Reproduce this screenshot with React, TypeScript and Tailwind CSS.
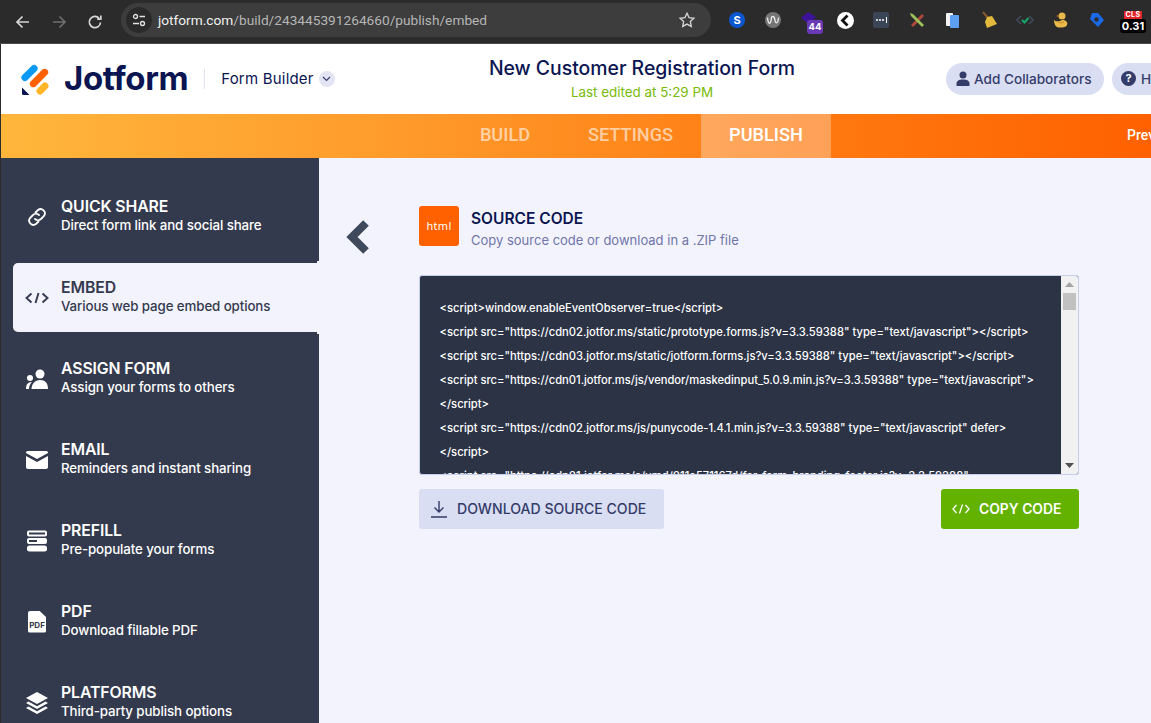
import React from "react";

const sans = "font-['Inter','Noto_Sans',sans-serif]";

function Ext({ children, className = "" }: { children: React.ReactNode; className?: string }) {
  return <div className={`w-[20px] h-[20px] flex items-center justify-center relative shrink-0 ${className}`}>{children}</div>;
}

function ChromeBar() {
  return (
    <div className="h-[44px] bg-[#2b2b2b] border-b border-[#4a4a4a] flex items-center shrink-0 w-full">
      <div className="w-[120px] flex items-center pl-[14px] gap-[18px] shrink-0">
        <svg width="18" height="18" viewBox="0 0 18 18" fill="none" stroke="#d6d6d6" strokeWidth="1.7"><path d="M15 9H3.500M8.500 3.500 3 9l5.500 5.500" /></svg>
        <svg width="18" height="18" viewBox="0 0 18 18" fill="none" stroke="#6e6e6e" strokeWidth="1.700"><path d="M3 9h11.500M9.500 3.500 15 9l-5.500 5.500" /></svg>
        <svg width="18" height="18" viewBox="0 0 18 18" fill="none" stroke="#d6d6d6" strokeWidth="1.700"><path d="M14.500 9.500a5.600 5.600 0 1 1-1.500-4.300M14.800 2.500v3.600h-3.600" /></svg>
      </div>
      <div className="w-[590px] h-[34px] ml-[1px] -mt-[3px] rounded-full bg-[#3d3d3d] flex items-center shrink-0">
        <div className="w-[26px] h-[26px] ml-[5px] rounded-full bg-[#2a2a2a] flex items-center justify-center shrink-0">
          <svg width="16" height="14" viewBox="0 0 16 14" fill="none" stroke="#e2e2e2" strokeWidth="1.300"><circle cx="4.500" cy="3.500" r="2" /><path d="M8.500 3.500H14M2 10.500h6" /><circle cx="11.500" cy="10.500" r="2" /></svg>
        </div>
        <div className="ml-[6px] text-[13.700px] font-['Roboto',sans-serif] text-[#b6b6b6] whitespace-nowrap"><span className="text-[#f0f0f0]">jotform.com</span>/build/243445391264660/publish/embed</div>
        <svg className="ml-auto mr-[15px]" width="18" height="18" viewBox="0 0 24 24" fill="none" stroke="#d6d6d6" strokeWidth="1.800"><path d="m12 3 2.800 5.900 6.400.8-4.700 4.400 1.200 6.400L12 17.400l-5.700 3.100 1.200-6.400-4.700-4.400 6.400-.8z" /></svg>
      </div>
      <div className="flex-1 flex items-center gap-[16px] pl-[16px] -mt-[3px]">
        <Ext><div className="w-[16px] h-[16px] rounded-full bg-[#0b57d0] text-white text-[11px] font-bold leading-[16px] text-center font-['Inter',sans-serif]">S</div></Ext>
        <Ext><svg width="16" height="16" viewBox="0 0 16 16"><circle cx="8" cy="8" r="8" fill="#757575" /><path d="M2.500 5.500c.5 7 3 7 3.500 3s.5-4 2-4 1.500 1 2 4 3 4 3.500-3" fill="none" stroke="#eee" strokeWidth="1.300" /></svg></Ext>
        <Ext>
          <svg width="18" height="14" viewBox="0 0 18 14" className="absolute top-[1px] left-[1px]"><path d="M1 7 8 1l8 5-7 7z" fill="#3c1399" /></svg>
          <div className="absolute left-[8px] top-[10px] w-[16px] h-[14px] rounded-[3px] bg-[#6a3ab5] text-white text-[9.500px] font-bold leading-[14px] text-center font-['Inter',sans-serif]">44</div>
        </Ext>
        <Ext><svg width="17" height="17" viewBox="0 0 17 17"><circle cx="8.500" cy="8.500" r="8.500" fill="#fff" /><path d="M10.500 3.500 5.500 8.500l5 5" fill="none" stroke="#111" strokeWidth="2.800" /></svg></Ext>
        <Ext><div className="w-[16px] h-[16px] rounded-[2px] bg-[#3a4656] flex items-center justify-center gap-[1px]"><i className="w-[2px] h-[2px] rounded-full bg-white" /><i className="w-[2px] h-[2px] rounded-full bg-white" /><i className="w-[2px] h-[2px] rounded-full bg-white" /><i className="w-[1px] h-[6px] bg-white ml-[1px]" /></div></Ext>
        <Ext><svg width="18" height="18" viewBox="0 0 18 18"><path d="M3 14 14 3l2 2L5 16z" fill="#b0493c" /><path d="M2 2l3 1 11 11-2 2L3 5z" fill="#9cc25a" /></svg></Ext>
        <Ext><svg width="14" height="16" viewBox="0 0 14 16"><rect x="0" y="1" width="7" height="13" rx="1" fill="#f2f2f2" /><rect x="4" y="3" width="9" height="13" rx="1" fill="#5da0f2" /></svg></Ext>
        <Ext><svg width="18" height="18" viewBox="0 0 18 18"><path d="M3 1l5 6" stroke="#8a5a2b" strokeWidth="2" /><path d="M7 6l5-1 5 8-10 4-2-6z" fill="#e3b93c" /></svg></Ext>
        <Ext><svg width="18" height="12" viewBox="0 0 18 12" fill="none"><path d="M5 2 1 6l4 4M13 2l4 4-4 4" stroke="#3f4a5c" strokeWidth="1.600" /><path d="m6 6 2.500 2.500L12.500 4" stroke="#14a86b" strokeWidth="2" /></svg></Ext>
        <Ext><svg width="16" height="18" viewBox="0 0 16 18"><circle cx="9" cy="5" r="3.500" fill="#e9b949" /><path d="M1 9c2 2 4 1 6 1 1-1 3-1 4-1 3 1 4 3 3 5-1 3-8 3-10 2-2-1-3-4-3-7z" fill="#e9b949" /><path d="M5 11c2 1 4 1 6 0" stroke="#c98c1f" fill="none" /><path d="M5.500 4 3 5l2.500 1z" fill="#d9761c" /></svg></Ext>
        <Ext><svg width="16" height="16" viewBox="0 0 16 16"><path d="M3 1h6l6 7-6 7-8-8z" fill="#1a6ae8" /><circle cx="7.500" cy="7.500" r="2.200" fill="#2b2b2b" /></svg></Ext>
        <Ext>
          <div className="flex flex-col items-center mt-[4px]">
            <div className="bg-[#e0262b] text-white text-[7px] font-bold leading-[8px] px-[1.500px] tracking-[0.500px] font-['Inter',sans-serif]">CLS</div>
            <div className="bg-black text-white text-[11px] font-bold leading-[14px] px-[2px] rounded-[3px] font-['Inter',sans-serif]">0.31</div>
          </div>
        </Ext>
      </div>
    </div>
  );
}

function Logo() {
  return (
    <svg width="30" height="31" viewBox="0 0 30 31" className="shrink-0">
      <rect x="-3.500" y="-10" width="7" height="20" rx="3.500" transform="translate(8.500 9) rotate(45)" fill="#0a9af5" />
      <rect x="-3.500" y="-11.500" width="7" height="23" rx="3.500" transform="translate(18 14) rotate(45)" fill="#ff6100" />
      <rect x="-3.500" y="-7" width="7" height="14" rx="3.500" transform="translate(21.500 24.500) rotate(45)" fill="#ffb629" />
      <path d="M1 23.500 8.500 31H2.500A1.500 1.500 0 0 1 1 29.500z" fill="#0a1551" />
    </svg>
  );
}

function Header() {
  return (
    <div className="h-[70px] bg-white flex items-center shrink-0 w-full overflow-hidden">
      <div className="w-[488px] flex items-center pl-[20px] shrink-0">
        <Logo />
        <div className={`ml-[13px] -mt-[2px] text-[33px] leading-none font-bold text-[#0a1551] tracking-[-0.400px] ${sans}`}>Jotform</div>
        <div className="w-[1px] h-[20px] bg-[#dfe2f0] ml-[16px]" />
        <div className={`ml-[16px] mt-[1px] text-[15px] text-[#0a1551] tracking-[0.200px] ${sans}`}>Form Builder</div>
        <div className="w-[16px] h-[16px] ml-[5px] rounded-full bg-[#e3e5f5] flex items-center justify-center">
          <svg width="9" height="6" viewBox="0 0 9 6" fill="none" stroke="#343c6a" strokeWidth="1.100"><path d="m1 1 3.500 3.500L8 1" /></svg>
        </div>
      </div>
      <div className="w-[306px] shrink-0 flex flex-col items-center -mt-[1px]">
        <div className={`text-[19.400px] leading-[24px] font-medium text-[#0a1551] whitespace-nowrap ${sans}`}>New Customer Registration Form</div>
        <div className={`mt-[3px] text-[13.400px] leading-[18px] text-[#78bb07] whitespace-nowrap ${sans}`}>Last edited at 5:29 PM</div>
      </div>
      <div className="flex items-center gap-[8px] pl-[151px] -mt-[1px] shrink-0">
        <div className={`h-[32px] w-[158px] rounded-full bg-[#dadef3] flex items-center pl-[10px] text-[13.600px] font-medium text-[#343c6a] whitespace-nowrap shrink-0 ${sans}`}>
          <svg width="14" height="15" viewBox="0 0 14 15" fill="#343c6a"><circle cx="7" cy="4" r="3.500" /><path d="M0.500 15v-2.500C.5 10 3 8.500 7 8.500s6.500 1.500 6.500 4V15z" /></svg>
          <span className="ml-[4px] mt-[1px]">Add Collaborators</span>
        </div>
        <div className={`h-[32px] w-[80px] rounded-full bg-[#dadef3] flex items-center pl-[9px] text-[13.600px] font-medium text-[#343c6a] shrink-0 ${sans}`}>
          <div className="w-[15px] h-[15px] rounded-full bg-[#343c6a] text-white text-[11px] font-bold leading-[15px] text-center">?</div>
          <span className="ml-[5px] mt-[1px]">Help</span>
        </div>
      </div>
    </div>
  );
}

function Tabs() {
  const base = "h-full flex items-center justify-center pb-[2px] text-[18.200px] font-medium font-['Roboto',sans-serif] shrink-0";
  return (
    <div className="h-[44px] bg-[linear-gradient(90deg,#ffb63b_0%,#ff9a2b_35%,#ff7a10_70%,#ff6100_100%)] flex items-center shrink-0 w-full overflow-hidden">
      <div className="w-[449px] shrink-0" />
      <div className={`${base} w-[110px] text-white/60`}>BUILD</div>
      <div className={`${base} w-[141px] text-white/60`}>SETTINGS</div>
      <div className={`${base} w-[130px] text-white bg-white/30`}>PUBLISH</div>
      <div className="ml-[296px] pb-[2px] text-white text-[14px] font-medium font-['Roboto',sans-serif] whitespace-nowrap shrink-0">Preview Form</div>
    </div>
  );
}

const iconProps = { width: 24, height: 24, viewBox: "0 0 24 24" };

const items: { title: string; sub: string; active?: boolean; icon: React.ReactNode }[] = [
  {
    title: "QUICK SHARE",
    sub: "Direct form link and social share",
    icon: <svg {...iconProps} fill="none" stroke="currentColor" strokeWidth="1.800" strokeLinecap="round"><path d="M10.500 7.500l2.500-2.500a4.300 4.300 0 0 1 6 6l-3 3a4.300 4.300 0 0 1-6 0" /><path d="M13.500 16.500 11 19a4.300 4.300 0 0 1-6-6l3-3a4.300 4.300 0 0 1 6 0" /></svg>,
  },
  {
    title: "EMBED",
    sub: "Various web page embed options",
    active: true,
    icon: <svg {...iconProps} fill="none" stroke="currentColor" strokeWidth="1.900"><path d="M6.500 7.500 1.500 12l5 4.500M17.500 7.500l5 4.500-5 4.500M13.500 7l-3 10" /></svg>,
  },
  {
    title: "ASSIGN FORM",
    sub: "Assign your forms to others",
    icon: <svg {...iconProps} fill="currentColor"><circle cx="15" cy="7" r="4.500" /><path d="M6.500 22c0-5 3.500-9 8.500-9s8 3 8 9z" /><circle cx="5" cy="11" r="3" /><path d="M1 22c0-4 1.500-7 6-7-2 2-3 4-3 7z" /></svg>,
  },
  {
    title: "EMAIL",
    sub: "Reminders and instant sharing",
    icon: <svg {...iconProps} fill="currentColor"><path d="M2.600 3h18.800c.8 0 1.600.8 1.600 1.600v.4l-11 6-11-6v-.4C1 3.800 1.800 3 2.600 3z" /><path d="M1 8v11c0 1.200.8 2 2 2h18c1.200 0 2-.8 2-2V8l-11 6z" /></svg>,
  },
  {
    title: "PREFILL",
    sub: "Pre-populate your forms",
    icon: <svg {...iconProps} fill="currentColor" fillRule="evenodd"><path d="M4 1.500h16a2 2 0 0 1 2 2v2a2 2 0 0 1-2 2H4a2 2 0 0 1-2-2v-2a2 2 0 0 1 2-2zM4 3.500v2h16v-2z" /><path d="M4 9h16a2 2 0 0 1 2 2v2a2 2 0 0 1-2 2H4a2 2 0 0 1-2-2v-2a2 2 0 0 1 2-2zM4 11v2h8v-2z" /><rect x="2" y="16.500" width="20" height="6" rx="2.500" /></svg>,
  },
  {
    title: "PDF",
    sub: "Download fillable PDF",
    icon: (
      <div className="relative w-[18px] h-[22px] bg-white rounded-[2px] [clip-path:polygon(0_0,62%_0,100%_30%,100%_100%,0_100%)] flex items-end justify-center pb-[4px]">
        <span className="text-[#343a4a] text-[8px] leading-none font-bold font-['Inter',sans-serif]">PDF</span>
      </div>
    ),
  },
  {
    title: "PLATFORMS",
    sub: "Third-party publish options",
    icon: <svg {...iconProps} fill="currentColor"><path d="M12 1 23 7l-11 6L1 7z" /><path d="M3.500 10.500 1 12l11 6 11-6-2.500-1.500-8.500 4.700z" /><path d="M3.500 15.500 1 17l11 6 11-6-2.500-1.500-8.500 4.700z" /></svg>,
  },
];

function Sidebar() {
  return (
    <div className="w-[318px] shrink-0 bg-[#343a4d] pt-[24px] pl-[12px] flex flex-col gap-[12px] overflow-hidden h-[565px]">
      {items.map((it) => (
        <div
          key={it.title}
          className={`h-[69px] shrink-0 flex items-center rounded-l-[5px] relative ${sans} ${it.active ? "bg-[#f3f3fe] text-[#343a4d] before:content-[''] before:absolute before:right-0 before:-top-[2px] before:w-[2px] before:h-[2px] before:bg-[#f3f3fe] after:content-[''] after:absolute after:right-0 after:-bottom-[2px] after:w-[2px] after:h-[2px] after:bg-[#f3f3fe]" : "text-white"}`}
        >
          <div className="w-[48px] flex justify-center shrink-0">{it.icon}</div>
          <div className="flex flex-col -mt-[2px]">
            <div className="text-[15.800px] leading-[19px] font-semibold tracking-[-0.100px]">{it.title}</div>
            <div className="text-[13.300px] leading-[18px] font-medium tracking-[-0.100px]">{it.sub}</div>
          </div>
        </div>
      ))}
    </div>
  );
}

const lines = [
  '<script>window.enableEventObserver=true</script>',
  '<script src="https://cdn02.jotfor.ms/static/prototype.forms.js?v=3.3.59388" type="text/javascript"></script>',
  '<script src="https://cdn03.jotfor.ms/static/jotform.forms.js?v=3.3.59388" type="text/javascript"></script>',
  '<script src="https://cdn01.jotfor.ms/js/vendor/maskedinput_5.0.9.min.js?v=3.3.59388" type="text/javascript">',
  '</script>',
  '<script src="https://cdn02.jotfor.ms/js/punycode-1.4.1.min.js?v=3.3.59388" type="text/javascript" defer>',
  '</script>',
  '<script src="https://cdn01.jotfor.ms/s/umd/011e571167d/for-form-branding-footer.js?v=3.3.59388"',
];

function Main() {
  return (
    <div className="flex-1 h-[565px] bg-[#f3f3fe] flex overflow-hidden">
      <div className="w-[100px] shrink-0 flex justify-center pt-[62px]">
        <svg width="24" height="34" viewBox="0 0 24 34" className="mr-[22px]"><path d="M20 3 6 17l14 14" fill="none" stroke="#3e4a5c" strokeWidth="8" /></svg>
      </div>
      <div className="w-[660px] pt-[48px]">
        <div className="flex items-center h-[40px]">
          <div className="w-[40px] h-[40px] rounded-[3px] bg-[#ff6100] flex items-center justify-center text-white text-[11px] font-['Noto_Sans',sans-serif] tracking-[0.300px]">html</div>
          <div className={`ml-[12px] pt-[9px] ${sans}`}>
            <div className="text-[15.500px] leading-[20px] font-semibold text-[#0a1551]">SOURCE CODE</div>
            <div className="text-[13px] leading-[23px] text-[#6f76a7]">Copy source code or download in a .ZIP file</div>
          </div>
        </div>
        <div className="mt-[29px] h-[200px] rounded-[3px] border border-[#c8ceed] bg-[#2c3345] flex overflow-hidden">
          <div className={`flex-1 pl-[19.500px] pt-[20px] text-white text-[11.200px] leading-[24px] font-medium ${sans}`}>
            {lines.map((l, i) => (
              <div key={i} className="whitespace-nowrap">{l}</div>
            ))}
          </div>
          <div className="w-[17px] shrink-0 bg-[#f1f1f1] flex flex-col items-center">
            <svg width="9" height="5" viewBox="0 0 9 5" className="mt-[6px]"><path d="M4.500 0 9 5H0z" fill="#a3a3a3" /></svg>
            <div className="w-[13px] h-[17px] bg-[#c1c1c1] mt-[6px]" />
            <svg width="9" height="5" viewBox="0 0 9 5" className="mt-auto mb-[6px]"><path d="M4.500 5 9 0H0z" fill="#505050" /></svg>
          </div>
        </div>
        <div className={`mt-[14px] flex justify-between ${sans}`}>
          <div className="h-[40px] w-[245px] rounded-[3px] bg-[#dadef3] flex items-center pl-[11px] text-[#343c6a] text-[14.100px] font-medium">
            <svg width="18" height="18" viewBox="0 0 18 18" fill="none" stroke="#343c6a" strokeWidth="1.400"><path d="M9 1v11M4.500 7.500 9 12l4.500-4.500M1 17h16" /></svg>
            <span className="ml-[9px] whitespace-nowrap">DOWNLOAD SOURCE CODE</span>
          </div>
          <div className="h-[40px] w-[138px] rounded-[3px] bg-[#64b200] flex items-center pl-[11px] text-white text-[13.850px] font-semibold">
            <svg width="18" height="12" viewBox="0 0 18 12" fill="none" stroke="#fff" strokeWidth="1.300"><path d="M4.500 2 1 6l3.500 4M13.500 2 17 6l-3.500 4M10.500 1.500l-3 9" /></svg>
            <span className="ml-[9px] whitespace-nowrap">COPY CODE</span>
          </div>
        </div>
      </div>
    </div>
  );
}

export default function App() {
  return (
    <div className="w-[1151px] h-[723px] overflow-hidden bg-[#2b2b2b] flex">
      <div className="w-[1px] shrink-0 bg-[#2b2b2b]" />
      <div className="w-[1150px] flex flex-col shrink-0">
        <div className="-ml-[1px]"><ChromeBar /></div>
        <Header />
        <Tabs />
        <div className="flex">
          <Sidebar />
          <Main />
        </div>
      </div>
    </div>
  );
}
